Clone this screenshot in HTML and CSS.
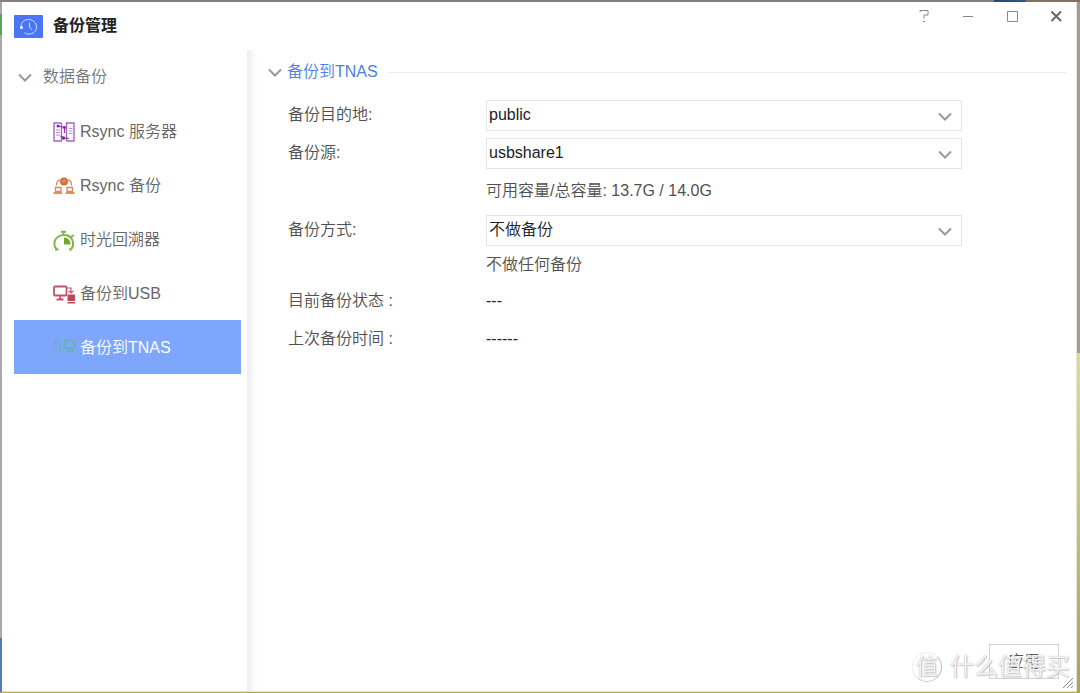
FILE: index.html
```html
<!DOCTYPE html>
<html lang="zh-CN">
<head>
<meta charset="utf-8">
<title>备份管理</title>
<link rel="stylesheet" href="styles.css">
</head>
<body>
<div class="window">
  <header class="titlebar">
    <svg class="app-icon" viewBox="0 0 29 23" fill="none" stroke="#d5defe">
      <rect width="29" height="23" rx="1" fill="#4b75f7" stroke="none"/>
      <path d="M7 11.500C7 7 10.500 4.500 14.500 4.500S22.500 7.500 22.500 12 19 19 15 19s-4-1-5-2M15.500 7.500v4.500l2.500 3"/>
      <circle cx="7.500" cy="12.500" r="1.500" fill="#fff" stroke="none"/>
    </svg>
    <h1 class="title">备份管理</h1>
    <div class="controls">
      <button class="control" aria-label="帮助"><svg viewBox="0 0 12 14"><path d="M2 3V1.500h8V6H6v3.500M5 12.500h2"/></svg></button>
      <button class="control" aria-label="最小化"><svg viewBox="0 0 12 14"><path d="M1 7.500h10"/></svg></button>
      <button class="control" aria-label="最大化"><svg viewBox="0 0 12 14"><path d="M1.500 2.500h10v10h-10z"/></svg></button>
      <button class="control close" aria-label="关闭"><svg viewBox="0 0 12 14"><path d="M1.500 2.500l9.500 9.500M11 2.500L1.500 12"/></svg></button>
    </div>
  </header>
  <div class="body">
    <nav class="sidebar">
      <button class="group">
        <svg class="chevron" viewBox="0 0 14 9"><path d="M1 1.500l6 6 6-6"/></svg>数据备份
      </button>
      <a class="item" href="#server">
        <svg class="item-icon" viewBox="0 0 24 22" fill="none" stroke="#a566c4" stroke-width="1.400">
          <path d="M9.500 2H2v18h7.500V2M14.500 20H22V2h-7.500v18"/>
          <path d="M4 9h4M4 11.500h4M4 14h4M17 7.500h3.500M17 10h3.500M17 12.500h3.500" stroke="#b98ad0" stroke-width="1"/>
          <path d="M6 5l6.500 1.500V12M17 17.500l-5.500-.5-3-2" stroke="#8a34aa" stroke-width="1.200"/>
          <circle cx="6" cy="5" r="1.500" fill="#7f239f" stroke="none"/>
          <circle cx="12.500" cy="6.500" r="1.500" fill="#7f239f" stroke="none"/>
          <circle cx="11.500" cy="17" r="1.700" fill="#7f239f" stroke="none"/>
        </svg>Rsync 服务器</a>
      <a class="item" href="#rsync">
        <svg class="item-icon" viewBox="0 0 24 22" fill="none" stroke="#d68a62" stroke-width="1.300">
          <circle cx="12" cy="6.500" r="4" fill="#cf7140" stroke="none"/>
          <path d="M4.500 10.500C4.500 6.500 5.500 5 8 4.800M19.500 10.500C19.500 6.500 18.500 5 16 4.800"/>
          <path d="M3.500 12.500H9v4H3.500zM15 12.500h5.500v4H15z"/>
          <path d="M1.500 18H10M13.500 18h9" stroke="#cf7140" stroke-width="1.600"/>
          <path d="M10 5.500l2 1 2-1.500" stroke="#f0b899" stroke-width=".8"/>
        </svg>Rsync 备份</a>
      <a class="item" href="#time">
        <svg class="item-icon" viewBox="0 0 24 22" fill="none" stroke="#82b547" stroke-width="2">
          <path d="M5.500 20.500C1 18 1.500 10.500 6.500 7.500s12-1.500 14 4 0 7.500-2.500 9M11.500 6V3M9 2.800h5M19 8l3-2M3 20.500h3.500M17 20.500h3"/>
          <path d="M12 8.500c4 0 6.500 3 6.500 7H12z" fill="#70a832" stroke="none"/>
        </svg>时光回溯器</a>
      <a class="item" href="#usb">
        <svg class="item-icon" viewBox="0 0 24 22" fill="none" stroke="#c05568" stroke-width="1.800">
          <rect x="2" y="3.500" width="12.500" height="9" rx="1"/>
          <path d="M8.200 13v3M4.500 16.500h7"/>
          <path d="M15 5h4v4M16.500 8l2.500 2 2.500-2" stroke-width="1.200"/>
          <path d="M15.500 11.500H23V18h-7.500zM15.500 19H23v1.500h-7.500z" fill="#bf4558" stroke="none"/>
        </svg>备份到USB</a>
      <a class="item active" href="#tnas" aria-current="page">
        <svg class="item-icon" viewBox="0 0 24 22" fill="none" stroke="#68b0b4" stroke-width="1">
          <path d="M2 6.500h6.500V15H2z"/>
          <path d="M3.500 3.500h3.500v3H3.500z"/>
          <rect x="12.500" y="3.500" width="10" height="7.500" rx="1.500" stroke-width="2"/>
          <path d="M17.500 11v3M14 14.500h7" stroke-width="1.800"/>
        </svg>备份到TNAS</a>
    </nav>
    <main class="content">
      <h2 class="section">
        <svg class="chevron" viewBox="0 0 14 9"><path d="M1 1.500l6 6 6-6"/></svg>
        <span>备份到TNAS</span>
      </h2>
      <form class="form">
        <label for="dest">备份目的地:</label>
        <div class="field">
          <select id="dest"><option>public</option></select>
          <svg class="chevron arrow" viewBox="0 0 14 9"><path d="M1 1.500l6 6 6-6"/></svg>
        </div>
        <label for="source">备份源:</label>
        <div class="field">
          <select id="source"><option>usbshare1</option></select>
          <svg class="chevron arrow" viewBox="0 0 14 9"><path d="M1 1.500l6 6 6-6"/></svg>
        </div>
        <p class="note">可用容量/总容量: 13.7G / 14.0G</p>
        <label for="mode">备份方式:</label>
        <div class="field">
          <select id="mode"><option>不做备份</option></select>
          <svg class="chevron arrow" viewBox="0 0 14 9"><path d="M1 1.500l6 6 6-6"/></svg>
        </div>
        <p class="note hint">不做任何备份</p>
        <span>目前备份状态 :</span><span class="value">---</span>
        <span>上次备份时间 :</span><span class="value">------</span>
      </form>
      <footer class="footer"><button class="apply">应用</button></footer>
    </main>
  </div>
  <div class="watermark"><span class="seal">值</span><span>什么值得买</span></div>
  <svg class="grip" viewBox="0 0 12 12"><path d="M1 11L11 1M5 11l6-6M9 11l2-2"/></svg>
</div>
</body>
</html>
```
FILE: styles.css
```css
* { box-sizing: border-box; }

body {
  margin: 0;
  height: 100vh;
  padding: 2px 3px 1px 2px;
  background:
    linear-gradient(90deg, #858080 92%, #29436d 92%, #385984 95%, #827160 95%) top / 100% 2px no-repeat,
    linear-gradient(#b8a83f, #b8a83f) bottom / 100% 1px no-repeat,
    linear-gradient(#a9a9a9 2%, #57a45b 2%, #57a45b 5%, #a9a9a9 5%, #a9a9a9 92%, #5878bd 92%) left / 2px 100% no-repeat,
    linear-gradient(#a59b91 51%, #dce08b 51%, #a9a450) right / 3px 100% no-repeat;
  color: #505050;
  font: 350 16px/24px "Liberation Sans", "Noto Sans CJK SC", sans-serif;
}

button, select { font: inherit; color: inherit; }
h1, h2, p { margin: 0; }

.window {
  position: relative;
  display: flex;
  flex-direction: column;
  height: 100%;
  background: #fff;
  border-right: 1px solid #e4e4e4;
  border-bottom: 1px solid #e4e4e4;
}

.titlebar {
  display: flex;
  flex: none;
  align-items: center;
  height: 48px;
  padding-left: 12px;
}
.app-icon { width: 29px; height: 23px; }
.title { margin-left: 10px; color: #222; font-size: 16px; font-weight: 700; }

.controls {
  display: flex;
  align-self: flex-start;
  gap: 12px;
  margin-left: auto;
  padding: 4px 4px 0 0;
}
.control {
  display: grid;
  place-items: center;
  width: 32px;
  height: 20px;
  padding: 0;
  border: 0;
  background: none;
}
.control svg { width: 12px; height: 14px; fill: none; stroke: #888; stroke-width: 1; }
.close svg { stroke: #666; stroke-width: 2; }

.body { display: flex; flex: 1; min-height: 0; }

.sidebar { flex: none; width: 245px; padding: 0 6px 0 12px; }
.group {
  display: flex;
  align-items: center;
  width: 100%;
  height: 54px;
  padding: 0 0 0 4px;
  border: 0;
  background: none;
  color: #777;
  gap: 11px;
}
.chevron {
  flex: none;
  width: 14px;
  height: 9px;
  fill: none;
  stroke: #999;
  stroke-width: 2;
}
.item {
  display: flex;
  align-items: center;
  height: 54px;
  padding: 2px 0 0 38px;
  gap: 4px;
  color: #666;
  text-decoration: none;
}
.item-icon { width: 24px; height: 22px; }
.active { background: #7ea6fd; color: #fff; }

.content {
  display: flex;
  flex: 1;
  flex-direction: column;
  min-width: 0;
  padding: 8px 10px 12px 21px;
  background: linear-gradient(90deg, #ededed, #fff) left / 10px 100% no-repeat;
}
.section {
  display: flex;
  align-items: center;
  height: 28px;
  gap: 5px;
  color: #4d7fe8;
  font-size: 16px;
  font-weight: 350;
}
.section::after { content: ""; flex: 1; height: 1px; margin-left: 5px; background: #ebebeb; }

.form {
  display: grid;
  grid-template-columns: 198px 1fr;
  grid-template-rows: 38px 38px 38px 40px 32px 38px 38px;
  align-items: center;
  padding: 10px 104px 0 20px;
}
.field { display: flex; position: relative; }
.field select {
  width: 100%;
  height: 31px;
  padding: 0 36px 0 2px;
  border: 1px solid #e6e6e6;
  border-radius: 0;
  background: #fff;
  color: #222;
  appearance: none;
}
.arrow { position: absolute; right: 10px; top: 12px; pointer-events: none; }
.note { grid-column: 2; }
.hint { align-self: start; padding-top: 3px; }
.value { color: #222; }

.footer { display: flex; justify-content: flex-end; margin-top: auto; padding-right: 7px; }
.apply {
  width: 70px;
  height: 35px;
  padding: 0;
  border: 1px solid #d2d2d2;
  background: #fff;
  color: #555;
}

.watermark {
  position: absolute;
  right: 6px;
  bottom: 8px;
  display: flex;
  align-items: center;
  gap: 8px;
  color: rgba(255, 255, 255, 0.85);
  font-size: 24px;
  font-weight: 400;
  line-height: 32px;
  text-shadow: 0 0 1px #aaa, 1px 1px 1px #ccc;
  pointer-events: none;
}
.seal {
  width: 30px;
  height: 30px;
  border: 1px solid #eee;
  border-right-color: #bbb;
  border-bottom-color: #ccc;
  border-radius: 50%;
  font-size: 22px;
  line-height: 27px;
  text-align: center;
}
.grip {
  position: absolute;
  right: 2px;
  bottom: 2px;
  width: 12px;
  height: 12px;
  fill: none;
  stroke: #888;
}
```
